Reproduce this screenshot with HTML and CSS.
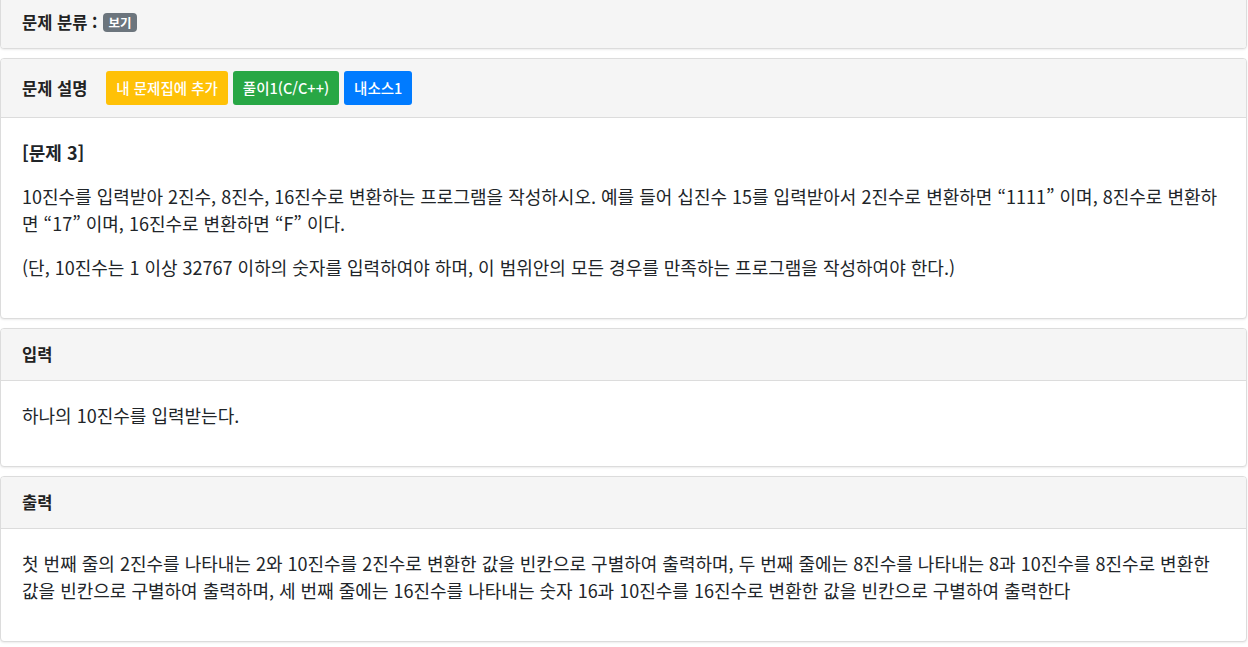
FILE: index.html
```html
<!DOCTYPE html>
<html lang="ko">
<head>
<meta charset="utf-8">
<link rel="stylesheet" href="styles.css">
</head>
<body>
<div class="page">
  <div class="card card-top">
    <div class="card-header only">문제 분류 : <span class="badge">보기</span></div>
  </div>

  <div class="card">
    <div class="card-header with-btns">
      <span class="title">문제 설명</span>
      <span class="btns">
        <a class="btn btn-warning">내 문제집에 추가</a>
        <a class="btn btn-success">풀이1(C/C++)</a>
        <a class="btn btn-primary">내소스1</a>
      </span>
    </div>
    <div class="card-body">
      <p class="strong">[문제 3]</p>
      <p>10진수를 입력받아 2진수, 8진수, 16진수로 변환하는 프로그램을 작성하시오. 예를 들어 십진수 15를 입력받아서 2진수로 변환하면 “1111” 이며, 8진수로 변환하면 “17” 이며, 16진수로 변환하면 “F” 이다.</p>
      <p>(단, 10진수는 1 이상 32767 이하의 숫자를 입력하여야 하며, 이 범위안의 모든 경우를 만족하는 프로그램을 작성하여야 한다.)</p>
    </div>
  </div>

  <div class="card">
    <div class="card-header">입력</div>
    <div class="card-body">
      <p>하나의 10진수를 입력받는다.</p>
    </div>
  </div>

  <div class="card">
    <div class="card-header">출력</div>
    <div class="card-body">
      <p>첫 번째 줄의 2진수를 나타내는 2와 10진수를 2진수로 변환한 값을 빈칸으로 구별하여 출력하며, 두 번째 줄에는 8진수를 나타내는 8과 10진수를 8진수로 변환한 값을 빈칸으로 구별하여 출력하며, 세 번째 줄에는 16진수를 나타내는 숫자 16과 10진수를 16진수로 변환한 값을 빈칸으로 구별하여 출력한다</p>
    </div>
  </div>
</div>
</body>
</html>
```

FILE: styles.css
```css
html, body {
  margin: 0;
  padding: 0;
  background: #fff;
}
body {
  font-family: "Noto Sans CJK KR", "Noto Sans", sans-serif;
  color: #212529;
  font-size: 18px;
  overflow: hidden;
}
.page {
  margin-top: -4px;
  margin-right: 1px;
}
.card {
  border: 1px solid #dcdcdc;
  border-radius: 4px;
  background: #fff;
  box-shadow: 0 1px 2px rgba(0, 0, 0, 0.08);
  margin-bottom: 9px;
  overflow: hidden;
}
.card-header {
  background: #f5f5f5;
  border-bottom: 1px solid #dcdcdc;
  padding: 12px 21px;
  font-size: 16.5px;
  font-weight: 700;
  line-height: 27px;
  color: #222;
}
.card-header.only {
  border-bottom: 0;
}
.card-header.with-btns {
  display: flex;
  align-items: center;
  line-height: 34px;
}
.title {
  margin-right: 19px;
}
.btns {
  display: flex;
  gap: 5px;
}
.btn {
  display: inline-block;
  height: 34px;
  line-height: 33px;
  padding: 0 10px;
  font-size: 14.5px;
  font-weight: 500;
  color: #fff;
  border-radius: 3px;
  box-sizing: border-box;
}
.btn-warning { background: #ffc107; }
.btn-success { background: #28a745; }
.btn-primary { background: #007bff; }
.badge {
  display: inline-block;
  background: #6c757d;
  color: #fff;
  font-size: 12.5px;
  font-weight: 700;
  line-height: 19px;
  padding: 0 5.5px;
  margin-left: 1px;
  border-radius: 4px;
  vertical-align: 1px;
}
.card-body {
  padding: 21px 21px 20px;
}
.card-body p {
  margin: 0 0 17px;
  line-height: 27px;
}
.card-body p.strong {
  font-weight: 700;
}
```
